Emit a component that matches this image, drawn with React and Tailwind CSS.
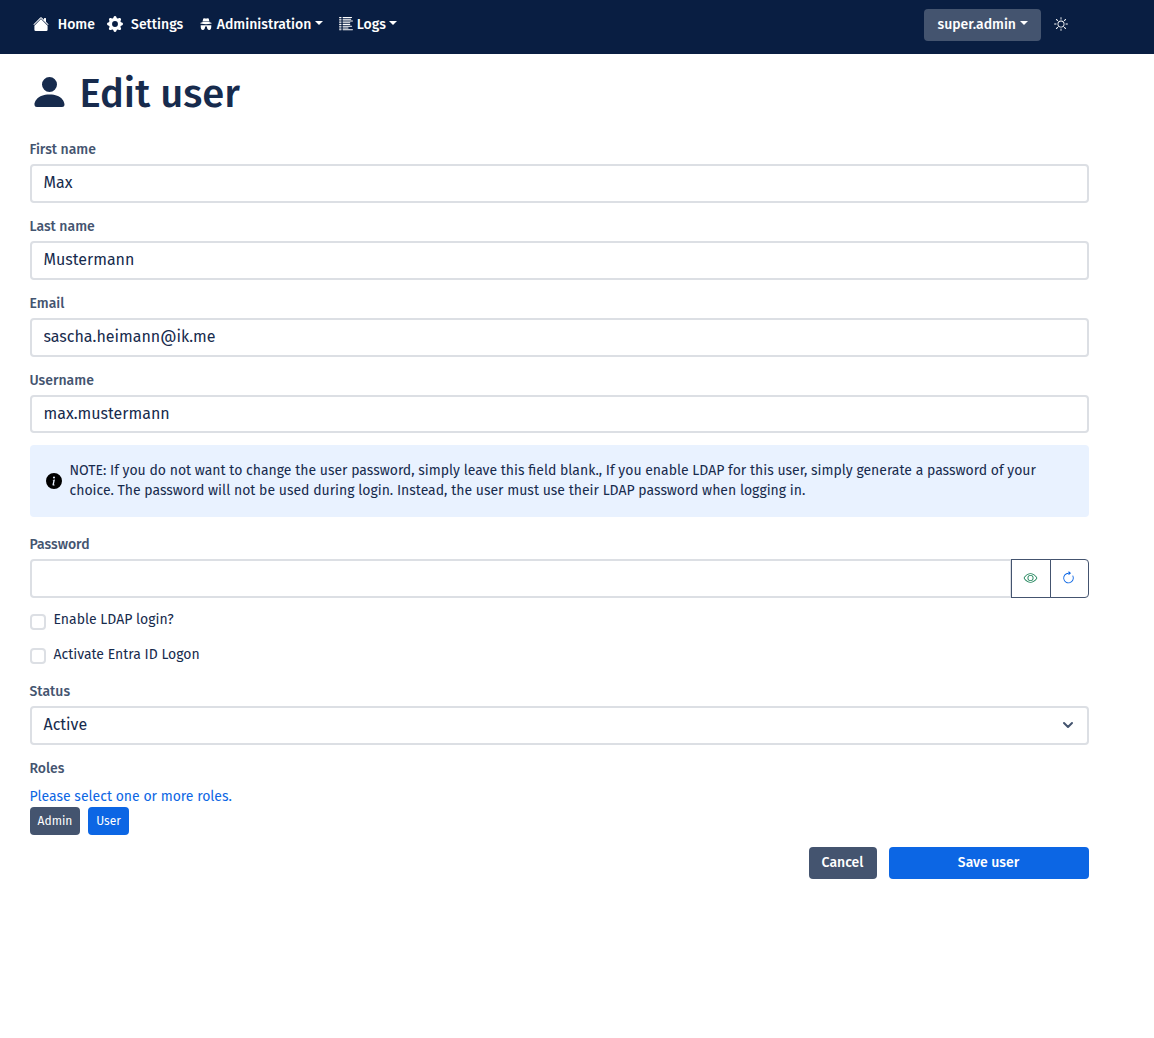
import {
  BsGearFill, BsListColumnsReverse, BsSun, BsPersonFill,
  BsInfoCircleFill, BsEye, BsArrowClockwise,
} from "react-icons/bs";

function Caret() {
  return <span className="mt-[-4px] ml-[3.5px] border-x-4 border-t-4 border-x-transparent border-t-current" />;
}

function House() {
  return (
    <svg viewBox="0 0 16 16" className="mb-px size-4" fill="currentColor">
      <path d="M8.707 1.500a1 1 0 0 0-1.414 0L.646 8.146a.5.5 0 0 0 .708.708L8 2.207l6.646 6.647a.5.5 0 0 0 .708-.708L13 5.793V2.500a.5.5 0 0 0-.5-.5h-1a.5.5 0 0 0-.5.5v1.293z" />
      <path d="m8 3.100 6.600 6.600v4.100a1.300 1.300 0 0 1-1.300 1.300H2.700a1.300 1.300 0 0 1-1.300-1.300V9.700z" />
    </svg>
  );
}

function Incognito() {
  return (
    <svg viewBox="0 0 12 12" className="mb-px size-3" fill="currentColor">
      <path d="M3.900.2c.7-.2 1.300.3 2.100.3S7.400 0 8.100.2c.7.200 1 1.700 1.200 2.700H2.700C2.900 1.900 3.200.4 3.900.2Z" />
      <path d="M2.500 3.500h7v.8c1.500.2 2.300.6 2.300 1s-2.500.9-5.800.9S.2 5.700.2 5.300s.8-.8 2.300-1Z" />
      <path d="M.7 7.200h10.600v1c0 2.400-.6 3.700-2.100 3.700-1.500 0-2.200-1.400-2.300-3.500H5.100C5 10.500 4.300 11.900 2.800 11.900c-1.500 0-2.100-1.300-2.100-3.700Z" />
    </svg>
  );
}

function Label({ children }) {
  return <label className="block h-[21px] text-sm leading-[21px] font-medium text-[#44546f]">{children}</label>;
}

function Field({ label, value }) {
  return (
    <div className="mb-[13.1px] flex h-[63.8px] flex-col justify-between">
      <Label>{label}</Label>
      <input
        defaultValue={value}
        className="h-[38.5px] w-full rounded-[4px] border-2 border-[#dcdfe4] bg-white px-3 pb-[1.5px] text-base text-[#172b4d] outline-none"
      />
    </div>
  );
}

function Check({ label, className, boxClassName }) {
  return (
    <div className={"flex h-[21px] items-start " + className}>
      <span className={"size-4 rounded-[4px] border-2 border-[#dcdfe4] bg-white " + boxClassName} />
      <span className="ml-2 text-sm leading-[21px]">{label}</span>
    </div>
  );
}

export default function App() {
  return (
    <div className="min-h-screen bg-white font-['Fira_Sans','Noto_Sans',sans-serif] text-[#172b4d]">
      <nav className="flex h-[54px] items-start bg-[#091e42] pl-[33.4px] text-sm font-medium text-white">
        <div className="flex h-12 items-center pt-px">
          <House />
          <span className="ml-[8.4px] w-[49px]">Home</span>
          <BsGearFill className="mb-px size-4" />
          <span className="ml-[8.3px] w-[68.7px]">Settings</span>
          <Incognito />
          <span className="ml-[5px]">Administration</span>
          <Caret />
          <BsListColumnsReverse className="mb-px ml-4 size-[14px]" />
          <span className="ml-1">Logs</span>
          <Caret />
        </div>
        <div className="mr-[86px] ml-auto flex h-12 items-center pt-[2px]">
          <button className="flex h-8 w-[117px] items-center justify-center rounded-[4px] bg-[#44546f]">
            super.admin
            <Caret />
          </button>
          <BsSun className="mr-[0.5px] mb-[2px] ml-[12.5px] size-[14px]" />
        </div>
      </nav>

      <main className="w-[1088.5px] pl-[29.5px]">
        <h1 className="flex h-[85px] items-start text-[40px] leading-[48px] font-medium">
          <BsPersonFill className="mt-[18px] -ml-[0.5px] size-10 translate-x-[0.5px]" />
          <span className="mt-4 ml-[10.5px]">Edit user</span>
        </h1>

        <Field label="First name" value="Max" />
        <Field label="Last name" value="Mustermann" />
        <Field label="Email" value="sascha.heimann@ik.me" />
        <Field label="Username" value="max.mustermann" />

        <div className="-mt-[1.6px] flex h-[72px] items-center rounded-[4px] bg-[#e9f2ff] pr-4 pl-4 text-sm leading-5">
          <BsInfoCircleFill className="size-4 shrink-0 text-black" />
          <p className="ml-2 w-[990px]">
            NOTE: If you do not want to change the user password, simply leave this field blank., If you enable LDAP for
            this user, simply generate a password of your choice. The password will not be used during login. Instead,
            the user must use their LDAP password when logging in.
          </p>
        </div>

        <div className="mt-[17px] flex h-16 flex-col justify-between">
          <Label>Password</Label>
          <div className="flex h-[39px]">
            <input
              type="password"
              className="-mr-px min-w-0 flex-1 rounded-l-[4px] border-2 border-[#dcdfe4] outline-none"
            />
            <button className="flex w-10 items-center justify-center border border-[#44546f] bg-white text-[#1f845a]">
              <BsEye className="-mt-px mr-px size-[14px] translate-x-[0.5px]" />
            </button>
            <button className="-ml-px flex w-[39px] items-center justify-center rounded-r-[4px] border border-[#44546f] bg-white text-[#0c66e4]">
              <BsArrowClockwise className="-mt-px mr-px size-[14px] -translate-x-[0.5px]" />
            </button>
          </div>
        </div>

        <Check label="Enable LDAP login?" className="mt-[11px]" boxClassName="mt-[5px]" />
        <Check label="Activate Entra ID Logon" className="mt-[14px]" boxClassName="mt-1" />

        <div className="mt-4 flex h-16 flex-col justify-between">
          <Label>Status</Label>
          <button className="flex h-[39px] items-center rounded-[4px] border-2 border-[#dcdfe4] bg-white px-3 pb-px text-left text-base">
            <span>Active</span>
            <svg viewBox="0 0 16 16" className="-mr-px ml-auto size-4" fill="none" stroke="#44546f" strokeWidth="2">
              <path d="M4 6l4 4 4-4" strokeLinecap="round" strokeLinejoin="round" />
            </svg>
          </button>
        </div>

        <div className="mt-[13px]">
          <Label>Roles</Label>
          <p className="mt-[7px] h-[21px] text-sm leading-[21px] text-[#0c66e4]">Please select one or more roles.</p>
          <div className="flex gap-2 text-xs text-white">
            <span className="flex h-7 w-[50px] items-center justify-center rounded-[4px] bg-[#44546f] pl-px">Admin</span>
            <span className="flex h-7 w-[41px] items-center justify-center rounded-[4px] bg-[#0c66e4] pl-px">User</span>
          </div>
        </div>

        <div className="mt-3 flex justify-end gap-3 text-sm font-medium text-white">
          <button className="h-8 w-[68px] rounded-[4px] bg-[#44546f]">Cancel</button>
          <button className="h-8 w-[200px] rounded-[4px] bg-[#0c66e4]">Save user</button>
        </div>
      </main>
    </div>
  );
}
